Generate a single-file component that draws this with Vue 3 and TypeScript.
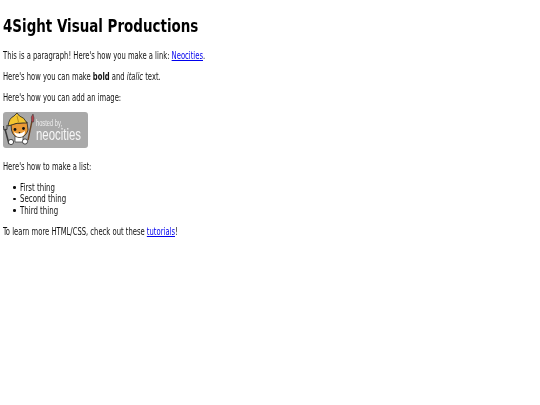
<script setup lang="ts">
const items: string[] = ['First thing', 'Second thing', 'Third thing']
</script>

<template>
  <main class="page">
    <h1 class="title">4Sight Visual Productions</h1>
    <p class="para">This is a paragraph! Here's how you make a link: <a href="#">Neocities</a>.</p>
    <p class="para">Here's how you can make <strong>bold</strong> and <em>italic</em> text.</p>
    <p class="para">Here's how you can add an image:</p>
    <svg class="badge" width="85" height="36" viewBox="0 0 85 36" role="img" aria-label="Hosted by Neocities">
      <rect x="0" y="0" width="85" height="36" rx="3" fill="#a9a9a9" />
      <!-- wrench -->
      <path d="M2 17 L6 32" stroke="#3a3a3a" stroke-width="1.5" />
      <path d="M0.5 14 L1 18 L4 17.5 L4 13" fill="none" stroke="#3a3a3a" stroke-width="1" />
      <!-- paintbrush -->
      <path d="M29 9 L25 28" stroke="#6b4423" stroke-width="1.4" />
      <path d="M28.6 10 L28.3 5 L30 2 L31 6 L30.6 10 Z" fill="#b8404a" stroke="#333" stroke-width="0.5" />
      <!-- body -->
      <path d="M12 24 L20 24 L20 30 L12 30 Z" fill="#fff" stroke="#333" stroke-width="0.7" />
      <!-- face -->
      <path d="M8 12 L24 10 L25 18 Q23 25 16.5 25.5 Q10 25 8.5 18 Z" fill="#ea9a35" stroke="#222" stroke-width="0.8" />
      <path d="M11 20 Q16 23.5 22 19 Q22 25 16.5 25 Q12 25 11 20 Z" fill="#fff" />
      <circle cx="12" cy="17.5" r="1.4" fill="#111" />
      <circle cx="20.5" cy="16.5" r="1.4" fill="#111" />
      <path d="M15.3 20 L17.7 20 L16.5 21.4 Z" fill="#222" />
      <!-- hard hat -->
      <path d="M5 14 Q6 6 11 4 L14 1 L16.5 4 Q21 5 24 11 Q14 10 5 14 Z" fill="#f3c531" stroke="#222" stroke-width="0.8" />
      <path d="M14 4 L15.5 10" stroke="#b98f1d" stroke-width="1" />
      <!-- hands -->
      <circle cx="8" cy="30" r="2.6" fill="#fff" stroke="#222" stroke-width="0.8" />
      <circle cx="22" cy="29.5" r="2.6" fill="#fff" stroke="#222" stroke-width="0.8" />
      <text x="33" y="14" class="hosted" textLength="26" lengthAdjust="spacingAndGlyphs">hosted by,</text>
      <text x="33" y="28" class="neo" textLength="45" lengthAdjust="spacingAndGlyphs">neocities</text>
    </svg>
    <p class="para">Here's how to make a list:</p>
    <ul class="list">
      <li v-for="item in items" :key="item" class="item"><span class="squeeze">{{ item }}</span></li>
    </ul>
    <p class="para last">To learn more HTML/CSS, check out these <a href="#">tutorials</a>!</p>
  </main>
</template>

<style scoped>
.page {
  padding: 3px;
  font-family: "DejaVu Sans", sans-serif;
  font-stretch: condensed;
  font-size: 10px;
  line-height: 11px;
  color: #111;
  background: #fff;
  filter: blur(0.3px);
}
.title {
  margin: 12px 0 14px;
  font-size: 18px;
  line-height: 21px;
  font-weight: 700;
  color: #000;
  transform: scaleX(0.83);
  transform-origin: left center;
  white-space: nowrap;
}
.para {
  margin: 10px 0;
  transform: scaleX(0.757);
  transform-origin: left center;
  white-space: nowrap;
}
.para.last {
  margin-top: 9.5px;
}
.badge {
  display: block;
  margin: -1px 0 12.5px;
}
.hosted {
  font-family: "Liberation Sans", sans-serif;
  font-size: 9px;
  fill: #eee;
}
.neo {
  font-family: "Liberation Sans", sans-serif;
  font-size: 16px;
  fill: #f6f6f6;
}
.list {
  margin: 10px 0 9.5px;
  padding-left: 17px;
  line-height: 11.5px;
  list-style: none;
}
.item {
  position: relative;
}
.item::before {
  content: "";
  position: absolute;
  left: -7px;
  top: 4.5px;
  width: 2.5px;
  height: 2.5px;
  border-radius: 50%;
  background: #111;
}
.squeeze {
  display: inline-block;
  transform: scaleX(0.78);
  transform-origin: left center;
}
a {
  color: #0000ee;
}
</style>
